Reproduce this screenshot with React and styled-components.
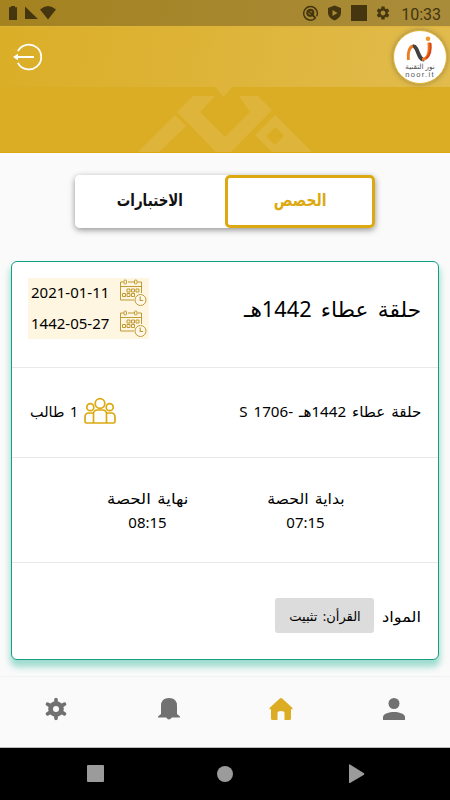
import React from "react";
import styled, { createGlobalStyle } from "styled-components";
import { MdSettings } from "react-icons/md";

const GlobalStyle = createGlobalStyle`
  * { box-sizing: border-box; }
  body { margin: 0; background: #fafafa; }
`;

const Screen = styled.div`
  width: 450px;
  height: 800px;
  display: flex;
  flex-direction: column;
  overflow: hidden;
  background: #fafafa;
  color: #000;
  font-family: "Noto Sans", "DejaVu Sans", sans-serif;
`;

const StatusBar = styled.div`
  height: 26px;
  flex: none;
  display: flex;
  align-items: center;
  padding: 0 9px 0 8px;
  background: linear-gradient(100deg, #a4821f, #a98c3b);
  color: #46360f;
  svg { display: block; flex: none; }
`;

const StatusIcons = styled.div`
  display: flex;
  align-items: center;
  margin-left: 244px;
`;

const Clock = styled.span`
  margin-left: auto;
  padding-top: 3px;
  font: 400 16px/24px Roboto, sans-serif;
  color: #43340f;
`;

const Hero = styled.header`
  height: 127px;
  flex: none;
  background: #dbad25;
  border-bottom: 1px solid #dea90e;
`;

const AppBar = styled.div`
  height: 61px;
  display: flex;
  justify-content: space-between;
  align-items: center;
  padding: 0 3px 0 13px;
  border-top: 1px solid #ddb339;
  background: linear-gradient(100deg, #dbae27, #e1bb4c);
`;

const Pattern = styled.svg`
  display: block;
  margin-left: 130px;
`;

const Logo = styled.div`
  width: 54px;
  height: 54px;
  border-radius: 50%;
  border: 1.5px solid #e4b534;
  background: #fff;
  box-shadow: 0 0 4px 1px rgba(145, 125, 70, 0.65);
  display: flex;
  flex-direction: column;
  align-items: center;
  padding-top: 5px;
  svg { display: block; flex: none; }
`;

const LogoText = styled.span`
  height: ${(p) => p.$line}px;
  font-family: "Liberation Sans", "DejaVu Sans", sans-serif;
  font-size: ${(p) => p.$size}px;
  line-height: ${(p) => p.$line}px;
  letter-spacing: ${(p) => p.$gap || 0}px;
  color: #555;
  white-space: nowrap;
  overflow: hidden;
  flex: none;
`;

const Tabs = styled.div`
  direction: rtl;
  width: 300px;
  height: 53px;
  flex: none;
  margin: 22px 0 0 75px;
  display: flex;
  border-radius: 5px;
  background: #fff;
  box-shadow: 0 2px 6px rgba(0, 0, 0, 0.42);
`;

const Tab = styled.button`
  flex: 1;
  padding: 0 0 4px;
  border: ${(p) => (p.$active ? "3px solid #dca910" : "3px solid transparent")};
  border-radius: 5px;
  background: #fff;
  color: ${(p) => (p.$active ? "#dca910" : "#111")};
  font: 700 17px/24px "Noto Sans", "DejaVu Sans", sans-serif;
`;

const Card = styled.main`
  direction: rtl;
  width: 428px;
  height: 399px;
  flex: none;
  margin: 33px 0 0 11px;
  border: 1px solid #159e83;
  border-radius: 6px;
  background: #fff;
  box-shadow: 0 6px 6px 1px rgba(120, 207, 190, 0.7);
  display: flex;
  flex-direction: column;
`;

const Row = styled.section`
  height: ${(p) => p.$h}px;
  flex: none;
  padding: 0 17px ${(p) => p.$lift || 0}px 16px;
  display: flex;
  align-items: ${(p) => p.$align || "center"};
  justify-content: ${(p) => p.$justify || "space-between"};
  & + & { border-top: 1.5px solid #e8e8e8; }
`;

const Fit = styled.span`
  display: inline-block;
  white-space: nowrap;
  font-size: ${(p) => p.$size || 15}px;
  line-height: ${(p) => p.$line || 24}px;
  word-spacing: ${(p) => p.$ws || 0}px;
  transform: scaleX(${(p) => p.$sx || 1});
  transform-origin: ${(p) => p.$origin || "right"};
`;

const Title = styled.h1`
  margin: 27px 0 0;
  font-weight: 400;
  line-height: 32px;
`;

const Dates = styled.div`
  direction: ltr;
  width: 121px;
  height: 61px;
  margin-top: 16px;
  padding-left: 3px;
  background: #fff6e1;
`;

const DateLine = styled.div`
  height: 30.5px;
  display: flex;
  justify-content: space-between;
  align-items: center;
  padding-right: 2px;
  font-size: 15px;
  line-height: 24px;
  span { padding-bottom: 2px; }
  svg { display: block; }
`;

const Students = styled.div`
  display: flex;
  align-items: center;
  gap: 6px;
  svg { display: block; }
`;

const Times = styled.div`
  display: grid;
  grid-template-columns: 158px 158px;
  margin-left: 4px;
`;

const Time = styled.div`
  display: flex;
  flex-direction: column;
  align-items: center;
  font-size: 15px;
  line-height: 24px;
`;

const Subjects = styled.div`
  display: flex;
  align-items: center;
  gap: 10.5px;
  padding-top: 9px;
`;

const Chip = styled.span`
  width: 99px;
  height: 35px;
  border-radius: 3px;
  background: #dcdcdc;
  display: flex;
  align-items: center;
  justify-content: center;
`;

const TabBar = styled.nav`
  height: 72px;
  margin-top: auto;
  flex: none;
  display: grid;
  grid-template-columns: repeat(4, 112.5px);
  align-items: center;
  justify-items: center;
  padding-bottom: 6px;
  background: #fafafa;
  border-top: 1px solid #f2f2f2;
  border-bottom: 1px solid #bbb;
  svg { display: block; }
`;

const SystemBar = styled.div`
  height: 52px;
  flex: none;
  background: #000;
  svg { display: block; }
`;

const CalendarIcon = () => (
  <svg width="28" height="28" viewBox="0 0 28 28" fill="none" stroke="#c09b35" strokeWidth="1">
    <path d="M5 3H1.500V21H15M9 3h6.500M18.500 3H22.500V14M1.500 7.500H22.500" />
    <rect x="5" y="1" width="2.500" height="4" rx="1" />
    <rect x="15.500" y="1" width="2.500" height="4" rx="1" />
    <path d="M8 10h3v3H8zM12.500 10h3v3h-3zM17 10h3v3h-3zM3.500 14.500h3v3h-3zM8 14.500h3v3H8zM12.500 14.500h3v3h-3z" />
    <circle cx="21.500" cy="21" r="5.500" fill="#fff8e8" />
    <path d="M21.200 17.500v4h3" strokeWidth="1.200" />
  </svg>
);

const GroupIcon = () => (
  <svg width="32" height="28" viewBox="0 0 32 28" fill="none" stroke="#dca910" strokeWidth="1.700">
    <circle cx="16" cy="6.500" r="4.800" />
    <circle cx="6.300" cy="10.200" r="3.500" />
    <circle cx="25.700" cy="10.200" r="3.500" />
    <path d="M9.500 26V17q0-4 4-4h5q4 0 4 4v9M9.500 16H5q-4 0-4 4v4.500q0 1.500 1.500 1.500h27q1.500 0 1.500-1.500V20q0-4-4-4h-4.500" />
  </svg>
);

export default function App() {
  return (
    <>
      <GlobalStyle />
      <Screen>
        <StatusBar>
          <svg width="50" height="26" viewBox="8 0 50 26" fill="currentColor">
            <path d="M11 6h4v1.200h2V20H9V7.200h2zM25 6.500L38 19H25zM40 9.500q8-7 16 0L48 19.500z" />
          </svg>
          <StatusIcons>
            <svg width="73" height="26" viewBox="302 0 73 26" fill="none" stroke="currentColor">
              <path d="M315.500 18a6.800 6.800 0 1 1 1.200-1.800" strokeWidth="1.500" />
              <circle cx="310.300" cy="12.800" r="3" strokeWidth="2.200" />
              <path d="M309 11.500l6.500 6.500" strokeWidth="2" />
              <path d="M334.500 5.500l6.500 2.500v5q0 5-6.500 7.500-6.500-2.500-6.500-7.500V8z" fill="currentColor" stroke="none" />
              <path d="M332.500 10v6l5-3z" fill="#a98b37" stroke="none" />
              <path d="M351 5h16v16h-16z" fill="currentColor" stroke="none" />
            </svg>
            <MdSettings size={16} />
          </StatusIcons>
          <Clock>10:33</Clock>
        </StatusBar>

        <Hero>
          <AppBar>
            <svg width="30" height="28" viewBox="0 0 30 28" fill="none" stroke="#fff" strokeWidth="1.800">
              <path d="M4.900 8.200a12.400 12.400 0 1 1 0 11.600M3 14h18" />
              <path d="M0 14l5-3.300v6.600z" fill="#fff" stroke="none" />
            </svg>
            <Logo>
              <svg width="28" height="26" viewBox="0 0 28 26" fill="none">
                <path d="M2.500 24C1.500 15 4 10 8 10" stroke="#ee7b20" strokeWidth="2.800" />
                <path d="M7 10.500c5-1 5 14 11 13" stroke="#414141" strokeWidth="3.800" />
                <path d="M16 23.500c6 0 8-7 7-17" stroke="#ed741d" strokeWidth="3" />
                <path d="M24.500 7c1 8-1 13-4.500 15.500" stroke="#d94412" strokeWidth="2" />
                <circle cx="22" cy="2.800" r="2.300" fill="#f39830" />
              </svg>
              <LogoText $size={7.2} $line={9} dir="rtl">نور التقنية</LogoText>
              <LogoText $size={7.5} $line={8} $gap={1.3}>noor.it</LogoText>
            </Logo>
          </AppBar>
          <Pattern width="190" height="65" viewBox="130 87 190 65" fill="#dfb43a">
            <path d="M215 87h17l-8.500 10zM193 96h22l-15 16 25 25 25-25-11-16h19l14 14-42 43h-13l-40-41zM175 115l11 11-28 27h-21z" />
            <path fillRule="evenodd" d="M275 115l38 38h-40l-18-18zM276 127l-10 9 9 9 9-9z" />
          </Pattern>
        </Hero>

        <Tabs>
          <Tab $active>
            <Fit $size={17} $sx={0.82} $origin="center">الحصص</Fit>
          </Tab>
          <Tab>
            <Fit $size={17} $sx={0.79} $origin="center">الاختبارات</Fit>
          </Tab>
        </Tabs>

        <Card>
          <Row $h={105} $align="flex-start">
            <Title><Fit $size={21} $line={32} $ws={3.5} $sx={1.035}>حلقة عطاء 1442هـ</Fit></Title>
            <Dates>
              <DateLine><span>2021-01-11</span><CalendarIcon /></DateLine>
              <DateLine><span>1442-05-27</span><CalendarIcon /></DateLine>
            </Dates>
          </Row>
          <Row $h={90} $lift={3}>
            <Fit $ws={2} $sx={1.01}>حلقة عطاء 1442هـ -1706 S</Fit>
            <Students>
              <GroupIcon />
              <Fit $ws={2} $sx={0.96}>1 طالب</Fit>
            </Students>
          </Row>
          <Row $h={105} $justify="center">
            <Times>
              <Time><Fit $ws={2} $sx={1.05} $origin="center">بداية الحصة</Fit><span>07:15</span></Time>
              <Time><Fit $ws={2} $sx={1.11} $origin="center">نهاية الحصة</Fit><span>08:15</span></Time>
            </Times>
          </Row>
          <Row $h={97}>
            <Subjects>
              <Fit $sx={1.08}>المواد</Fit>
              <Chip><Fit $size={13} $ws={2} $origin="center">القرأن: تثبيت</Fit></Chip>
            </Subjects>
          </Row>
        </Card>

        <TabBar>
          <svg width="22" height="24" viewBox="-11 -12 22 24">
            <path d="M0-9.500V9.500M-8.500-4.900L8.500 4.900M-8.500 4.900L8.500-4.900" stroke="#717171" strokeWidth="3.600" strokeLinecap="round" />
            <circle r="7.800" fill="#717171" />
            <circle r="3" fill="#fafafa" />
          </svg>
          <svg width="22" height="22" viewBox="0 0 22 22" fill="#717171">
            <path d="M3 16V8Q3 0 11 0t8 8v8l3 2.500v1H13.800q-2.800 4-5.600 0H0v-1z" />
          </svg>
          <svg width="24" height="22" viewBox="0 0 24 22" fill="#dcad23">
            <path d="M10.500.7q1.500-1.200 3 0L23.500 10v1.300H22V20.500q0 1.500-1.500 1.500H15.500v-7q0-2-3.500-2t-3.500 2v7H3.500Q2 22 2 20.500V11.300H.5V10z" />
          </svg>
          <svg width="22" height="22" viewBox="0 0 22 22" fill="#717171">
            <circle cx="11" cy="5.500" r="5.500" />
            <path d="M0 22v-3.500C2 12.500 20 12.500 22 18.500V22z" />
          </svg>
        </TabBar>

        <SystemBar>
          <svg width="450" height="52" viewBox="0 0 450 52" fill="#9b9b9b">
            <rect x="87" y="17" width="17" height="17" rx="1" />
            <circle cx="225" cy="26" r="8" />
            <path d="M349 17q0-1 1-.5l14 8.700q.8.800 0 1.600l-14 8.200q-1 .3-1-.5z" />
          </svg>
        </SystemBar>
      </Screen>
    </>
  );
}
